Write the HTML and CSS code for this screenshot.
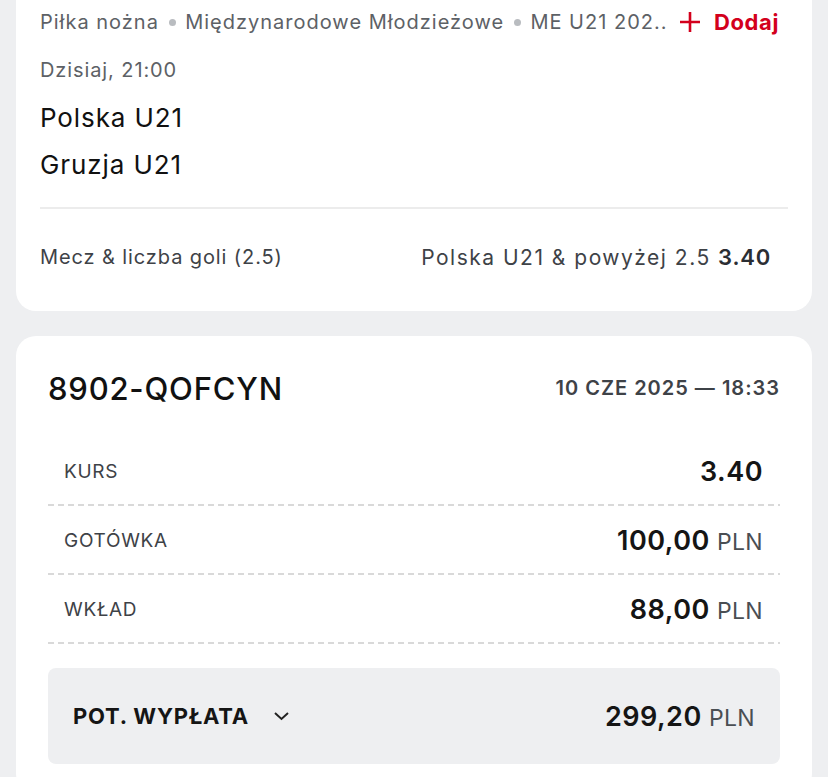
FILE: index.html
```html
<!DOCTYPE html>
<html>
<head>
	<title>Kupon 8902-QOFCYN</title>
	<link rel="stylesheet" href="styles.css">
</head>
<body>
	<div class="card event">
		<div class="crumbs">
			<span class="path">Piłka nożna <i class="dot"></i> Międzynarodowe Młodzieżowe <i class="dot"></i> ME U21 202..</span>
			<span class="add">
				<svg width="22" height="22" viewBox="0 0 22 22"><path d="M11 1v20M1 11h20" stroke="#d3001c" stroke-width="2.6" fill="none"/></svg>
				Dodaj
			</span>
		</div>
		<p class="when">Dzisiaj, 21:00</p>
		<p class="team">Polska U21</p>
		<p class="team">Gruzja U21</p>
		<div class="pick">
			<span>Mecz &amp; liczba goli (2.5)</span>
			<span class="choice">Polska U21 &amp; powyżej 2.5 <b>3.40</b></span>
		</div>
	</div>

	<div class="card slip">
		<div class="slip-head">
			<h2>8902-QOFCYN</h2>
			<span class="stamp">10 CZE 2025 — 18:33</span>
		</div>
		<ul class="rows">
			<li><span class="label">KURS</span><span class="value">3.40</span></li>
			<li><span class="label">GOTÓWKA</span><span class="value">100,00 <small>PLN</small></span></li>
			<li><span class="label">WKŁAD</span><span class="value">88,00 <small>PLN</small></span></li>
		</ul>
		<div class="payout">
			<span class="payout-label">POT. WYPŁATA
				<svg width="17" height="10" viewBox="0 0 17 10"><path d="M2 2l6.5 6 6.5-6" stroke="#222" stroke-width="2" fill="none"/></svg>
			</span>
			<span class="value">299,20 <small>PLN</small></span>
		</div>
	</div>
</body>
</html>
```

FILE: styles.css
```css
body {
	margin: 0;
	padding: 0 16px;
	background-color: #eeeff1;
	font-family: Inter, "Noto Sans", sans-serif;
	color: #111;
}

.card {
	background-color: white;
	border-radius: 20px;
}
.event {
	border-radius: 0 0 20px 20px;
	padding: 8px 24px 0 24px;
	height: 303px;
}
.slip {
	margin-top: 25px;
	padding: 36px 32px 30px 32px;
}

p {
	margin: 0;
}

.crumbs {
	display: flex;
	align-items: center;
	justify-content: space-between;
	padding-right: 9px;
	height: 28px;
	font-size: 20px;
	letter-spacing: 1px;
	color: #5d6166;
}
.dot {
	display: inline-block;
	width: 7px;
	height: 7px;
	border-radius: 50%;
	background-color: #b9bcc0;
	vertical-align: middle;
	margin: 0 3px 3px 3px;
}
.add {
	display: flex;
	align-items: center;
	gap: 13px;
	color: #d3001c;
	font-weight: 700;
	font-size: 22px;
	letter-spacing: 0.6px;
}
.when {
	margin-top: 20px;
	font-size: 20px;
	letter-spacing: 0.9px;
	line-height: 28px;
	color: #5d6166;
}
.team {
	font-size: 26px;
	letter-spacing: 0.9px;
	line-height: 32px;
	margin-top: 18px;
}
.team + .team {
	margin-top: 15px;
}
.pick {
	margin-top: 26px;
	border-top: 2px solid #ececec;
	display: flex;
	justify-content: space-between;
	align-items: center;
	height: 96px;
	padding-right: 17px;
	font-size: 20px;
	letter-spacing: 0.9px;
	color: #3e4247;
}
.choice {
	font-size: 21px;
	letter-spacing: 1.5px;
}
.pick b {
	font-size: 22px;
	font-weight: 600;
	letter-spacing: 0.8px;
	color: #2b2e33;
}

.slip-head {
	display: flex;
	justify-content: space-between;
	align-items: center;
	height: 32px;
}
.slip-head h2 {
	margin: 0;
	font-size: 31px;
	font-weight: 500;
	letter-spacing: 0.8px;
}
.stamp {
	font-size: 20px;
	font-weight: 600;
	letter-spacing: 1px;
	color: #3e4247;
}

.rows {
	list-style: none;
	margin: 33px 0 0 0;
	padding: 0;
}
.rows li {
	display: flex;
	justify-content: space-between;
	align-items: center;
	height: 69px;
	padding: 0 17px 0 16px;
	background: repeating-linear-gradient(90deg, #d9d9d9 0 6px, transparent 6px 10px) left bottom / 100% 2px no-repeat;
}
.label {
	font-size: 19px;
	letter-spacing: 0.7px;
	color: #3e4247;
}
.value {
	font-size: 27px;
	font-weight: 600;
	letter-spacing: 0.5px;
	color: #151515;
}
.value small {
	font-size: 23px;
	font-weight: 400;
	letter-spacing: 0.3px;
	color: #4a4e53;
}

.payout {
	margin-top: 24px;
	height: 96px;
	display: flex;
	justify-content: space-between;
	align-items: center;
	padding: 0 25px;
	background-color: #eeeff1;
	border-radius: 8px;
}
.payout-label {
	display: flex;
	align-items: center;
	gap: 24px;
	font-size: 22px;
	font-weight: 700;
	letter-spacing: 0.8px;
	color: #151515;
}
```
